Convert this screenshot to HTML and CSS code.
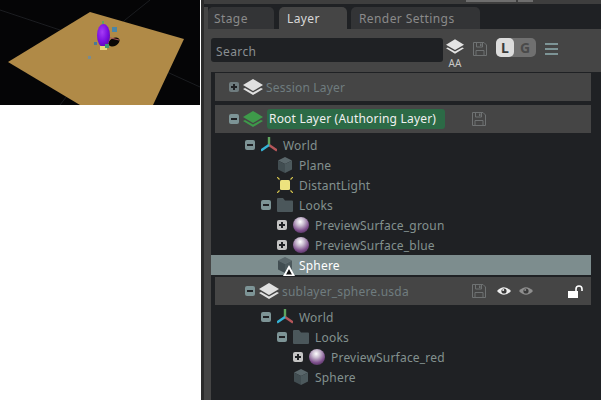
FILE: index.html
```html
<!DOCTYPE html>
<html lang="en">
<head>
    <meta charset="UTF-8">
    <title>Layer</title>
    <link rel="stylesheet" href="styles.css">
</head>
<body>
    <svg class="defs" width="0" height="0">
        <defs>
            <radialGradient id="ball" cx="45%" cy="30%" r="70%">
                <stop offset="0" stop-color="#ffffff"/>
                <stop offset="0.35" stop-color="#c9bcd0"/>
                <stop offset="0.8" stop-color="#7d4f8c"/>
                <stop offset="1" stop-color="#5d3a6b"/>
            </radialGradient>
            <radialGradient id="egg" cx="40%" cy="35%" r="70%">
                <stop offset="0" stop-color="#a63cf5"/>
                <stop offset="0.6" stop-color="#7a0fe0"/>
                <stop offset="1" stop-color="#5a08b0"/>
            </radialGradient>
            <symbol id="i-layers" viewBox="0 0 20 16">
                <path d="M2 9 L0 10 L10 16 L20 10 L18 9 L10 13.5 Z" fill="currentColor"/>
                <path d="M10 0 L20 6 L10 12 L0 6 Z" fill="currentColor"/>
            </symbol>
            <symbol id="i-save" viewBox="0 0 14 14">
                <path d="M.5 .5 H11 L13.5 3 V13.5 H.5 Z M3.5 .5 V5 H9.5 V.5 M3 13.5 V8.5 H11 V13.5" fill="none" stroke="currentColor"/>
                <rect x="7" y="1.5" width="1.5" height="2.5" fill="currentColor"/>
            </symbol>
            <symbol id="i-eye" viewBox="0 0 14 10">
                <path d="M0 5 Q7 -2.500 14 5 Q7 12.500 0 5 Z" fill="currentColor"/>
                <circle cx="7" cy="5" r="2.600" fill="#3a3a3a"/>
                <circle cx="6.200" cy="4" r="1" fill="currentColor"/>
            </symbol>
            <symbol id="i-world" viewBox="0 0 16 16">
                <path d="M8 0 V8" stroke="#5fa55f" stroke-width="2.400" fill="none"/>
                <path d="M8 8 L16 13.500" stroke="#b5565a" stroke-width="2.400" fill="none"/>
                <path d="M8 8 L0 13.500" stroke="#35b3d6" stroke-width="2.400" fill="none"/>
            </symbol>
            <symbol id="i-cube" viewBox="0 0 16 16">
                <path d="M8 0 L15 3.500 L8 7 L1 3.500 Z" fill="#5a676b"/>
                <path d="M1 3.500 L8 7 V16 L1 12.500 Z" fill="#414d51"/>
                <path d="M15 3.500 L8 7 V16 L15 12.500 Z" fill="#4c595d"/>
            </symbol>
            <symbol id="i-folder" viewBox="0 0 16 14">
                <path d="M0 1 Q0 0 1 0 H6 L8 2.500 H15 Q16 2.500 16 3.500 V13 Q16 14 15 14 H1 Q0 14 0 13 Z" fill="#4b575b"/>
            </symbol>
            <symbol id="i-ball" viewBox="0 0 16 16">
                <circle cx="8" cy="8" r="8" fill="url(#ball)"/>
            </symbol>
            <symbol id="i-light" viewBox="0 0 16 16">
                <rect x="3" y="3" width="10" height="10" rx="1.500" fill="#ece27e"/>
                <path d="M2.500 2.500 L0 0 M13.500 2.500 L16 0 M2.500 13.500 L0 16 M13.500 13.500 L16 16" stroke="#d9c84e" stroke-width="1.200"/>
            </symbol>
        </defs>
    </svg>

    <div class="app">
        <div class="left">
            <svg class="viewport" width="200" height="105" viewBox="0 0 200 105">
                <rect width="200" height="105" fill="#050506"/>
                <path d="M0 10 L90 40 M60 105 L125 20 M150 0 L125 20 M167 72 L200 87" stroke="#1b1d20" fill="none"/>
                <path d="M90 12 L184 39 L153 105 L80 105 L8 62 Z" fill="#b08a47"/>
                <ellipse cx="114" cy="42" rx="6" ry="4" fill="#0a0806" transform="rotate(-30 114 42)"/>
                <path d="M103 36 L119 40" stroke="#a8505a"/>
                <ellipse cx="103.500" cy="35.500" rx="6.500" ry="11.500" fill="url(#egg)"/>
                <rect x="100" y="46" width="7" height="4" fill="#e6d77a"/>
                <rect x="112" y="27" width="5" height="5" fill="#4a86a8"/>
                <rect x="105" y="44" width="4" height="4" fill="#3f9a70"/>
                <rect x="88" y="56" width="3" height="3" fill="#7a8c90"/>
                <rect x="94" y="42" width="3" height="3" fill="#4a7a98"/>
                <rect x="102" y="21" width="2" height="3" fill="#5fa55f"/>
            </svg>
        </div>

        <div class="panel">
            <div class="topstrip">
                <span class="strip-piece wide"></span>
                <span class="strip-piece narrow"></span>
            </div>
            <div class="tabs">
                <div class="tab tab-stage">Stage</div>
                <div class="tab tab-layer active">Layer</div>
                <div class="tab tab-render">Render Settings</div>
            </div>
            <div class="toolbar">
                <div class="search">Search</div>
                <div class="aa">
                    <svg class="aa-icon" width="18" height="15"><use href="#i-layers"/></svg>
                    <span>AA</span>
                </div>
                <svg class="save-top" width="14" height="14"><use href="#i-save"/></svg>
                <div class="switch">
                    <span class="switch-on">L</span>
                    <span class="switch-off">G</span>
                </div>
                <div class="menu"><i></i><i></i><i></i></div>
            </div>

            <div class="tree">
                <div class="layer layer-session">
                    <span class="toggle plus"></span>
                    <svg class="layer-icon" width="20" height="16"><use href="#i-layers"/></svg>
                    <span class="layer-name">Session Layer</span>
                </div>
                <div class="layer layer-root">
                    <span class="toggle minus"></span>
                    <svg class="layer-icon green" width="20" height="16"><use href="#i-layers"/></svg>
                    <span class="chip">Root Layer (Authoring Layer)</span>
                    <div class="layer-actions">
                        <svg class="save-row" width="14" height="14"><use href="#i-save"/></svg>
                    </div>
                </div>
                <div class="rows">
                    <div class="row d0"><span class="slot"><span class="toggle minus"></span></span><svg class="icon" width="16" height="16"><use href="#i-world"/></svg>World</div>
                    <div class="row d1"><span class="slot"></span><svg class="icon" width="16" height="16"><use href="#i-cube"/></svg>Plane</div>
                    <div class="row d1"><span class="slot"></span><svg class="icon" width="16" height="16"><use href="#i-light"/></svg>DistantLight</div>
                    <div class="row d1"><span class="slot"><span class="toggle minus"></span></span><svg class="icon" width="16" height="14"><use href="#i-folder"/></svg>Looks</div>
                    <div class="row d2"><span class="slot"><span class="toggle plus light"></span></span><svg class="icon" width="16" height="16"><use href="#i-ball"/></svg>PreviewSurface_groun</div>
                    <div class="row d2"><span class="slot"><span class="toggle plus light"></span></span><svg class="icon" width="16" height="16"><use href="#i-ball"/></svg>PreviewSurface_blue</div>
                    <div class="row d1 selected">
                        <span class="slot"></span>
                        <span class="icon-wrap">
                            <svg class="icon" width="16" height="16"><use href="#i-cube"/></svg>
                            <svg class="warn" width="12" height="11" viewBox="0 0 12 11"><path d="M6 3 L2.500 10 H9.500 Z" fill="#111"/><path d="M6 0 L12 11 H0 Z M6 4 L3 9.500 H9 Z" fill="#fff" fill-rule="evenodd"/></svg>
                        </span>
                        Sphere
                    </div>
                </div>
                <div class="layer layer-sub">
                    <span class="toggle minus"></span>
                    <svg class="layer-icon" width="20" height="16"><use href="#i-layers"/></svg>
                    <span class="layer-name">sublayer_sphere.usda</span>
                    <div class="layer-actions">
                        <svg class="save-row" width="14" height="14"><use href="#i-save"/></svg>
                        <svg class="eye" width="14" height="10"><use href="#i-eye"/></svg>
                        <svg class="eye dim" width="14" height="10"><use href="#i-eye"/></svg>
                        <svg class="lock" width="15" height="13" viewBox="0 0 15 13">
                            <path d="M8 6 V4 A3 3 0 0 1 14 4 V6" fill="none" stroke="#fff" stroke-width="1.600"/>
                            <rect x="0" y="6" width="10" height="7" fill="#fff"/>
                        </svg>
                    </div>
                </div>
                <div class="rows">
                    <div class="row d1"><span class="slot"><span class="toggle minus"></span></span><svg class="icon" width="16" height="16"><use href="#i-world"/></svg>World</div>
                    <div class="row d2"><span class="slot"><span class="toggle minus"></span></span><svg class="icon" width="16" height="14"><use href="#i-folder"/></svg>Looks</div>
                    <div class="row d3"><span class="slot"><span class="toggle plus light"></span></span><svg class="icon" width="16" height="16"><use href="#i-ball"/></svg>PreviewSurface_red</div>
                    <div class="row d2"><span class="slot"></span><svg class="icon" width="16" height="16"><use href="#i-cube"/></svg>Sphere</div>
                </div>
            </div>
        </div>
    </div>
</body>
</html>
```
FILE: styles.css
```css
body {
    margin: 0;
    background-color: #fff;
    font-family: "Noto Sans", sans-serif;
    font-size: 12px;
    letter-spacing: 0.2px;
}

.defs {
    display: block;
    height: 0;
}

.app {
    display: flex;
    width: 601px;
    height: 400px;
    overflow: hidden;
}

.left {
    width: 200px;
    flex: none;
    margin-right: 1px;
}

.viewport {
    display: block;
    filter: blur(0.4px);
}

.panel {
    flex: 1;
    display: flex;
    flex-direction: column;
    min-width: 0;
    background-color: #454545;
    border-left: 3px solid #2c2c2c;
    padding-left: 7px;
}

.topstrip {
    display: flex;
    justify-content: flex-end;
    gap: 2px;
    height: 7px;
    margin-left: -7px;
    padding-right: 68px;
    background: linear-gradient(#3e3e3e 0, #3e3e3e 4px, #1f2124 4px);
}

.strip-piece {
    height: 2px;
    background-color: #6e6e6e;
}

.strip-piece.wide {
    width: 50px;
}

.strip-piece.narrow {
    width: 15px;
}

.tabs {
    display: flex;
    height: 22px;
    margin-left: -3px;
    background-color: #1f2124;
    letter-spacing: 0.4px;
}

.tab {
    display: flex;
    align-items: center;
    padding: 1px 0 0 6px;
    box-sizing: border-box;
    border-radius: 5px 5px 0 0;
    background-color: #333436;
    color: #8a8a8a;
}

.tab-stage {
    width: 66px;
    margin-right: 5px;
}

.tab-layer {
    width: 68px;
    padding-left: 8px;
    margin-right: 4px;
}

.tab-render {
    width: 129px;
    padding-left: 8px;
}

.tab.active {
    background-color: #454545;
    color: #d8d8d8;
}

.toolbar {
    display: flex;
    align-items: flex-start;
    height: 43px;
    padding-top: 9px;
    box-sizing: border-box;
}

.search {
    display: flex;
    align-items: center;
    width: 232px;
    height: 24px;
    padding: 3px 0 0 5px;
    box-sizing: border-box;
    border-radius: 3px;
    background-color: #1f2124;
    color: #8a8f92;
    letter-spacing: 0.4px;
}

.aa {
    display: flex;
    flex-direction: column;
    align-items: center;
    width: 18px;
    margin-left: 3px;
    color: #c8c8c8;
    font-size: 10px;
    line-height: 10px;
    letter-spacing: 0;
}

.aa-icon {
    color: #e4e4e4;
    margin: 1px 0 4px;
}

.save-top {
    margin: 4px 0 0 9px;
    color: #6f7273;
}

.switch {
    display: flex;
    align-items: center;
    width: 40px;
    height: 19px;
    margin-left: 9px;
    border-radius: 5px;
    background-color: #707070;
    font-weight: bold;
    font-size: 14px;
    letter-spacing: 0;
}

.switch-on {
    width: 18px;
    height: 19px;
    line-height: 19px;
    text-align: center;
    border-radius: 5px;
    background-color: #dcdcdc;
    color: #3a3a3a;
}

.switch-off {
    flex: 1;
    text-align: center;
    color: #4a4a4a;
}

.menu {
    display: flex;
    flex-direction: column;
    gap: 3px;
    margin: 5px 0 0 9px;
}

.menu i {
    display: block;
    width: 13px;
    height: 2px;
    background-color: #7d9496;
}

.tree {
    flex: 1;
    background-color: #1f2124;
    padding-top: 1px;
}

.layer {
    display: flex;
    align-items: center;
    height: 28px;
    width: 376px;
    box-sizing: border-box;
    margin-left: 4px;
    background-color: #454545;
    color: #6f7c7f;
}

.layer-session,
.layer-root {
    padding-left: 14px;
    margin-bottom: 4px;
}

.layer-root {
    margin-bottom: 2px;
}

.layer-sub {
    padding-left: 30px;
    margin-top: 2px;
    margin-bottom: 2px;
}

.layer-icon {
    margin: 0 3px 0 4px;
    color: #e0e0e0;
}

.layer-icon.green {
    color: #3e9a4a;
}

.chip {
    display: block;
    width: 178px;
    height: 20px;
    box-sizing: border-box;
    line-height: 20px;
    padding-left: 2px;
    margin-left: 1px;
    border-radius: 3px;
    background-color: #2c6a46;
    color: #f0f0f0;
}

.layer-actions {
    display: flex;
    align-items: center;
    width: 119px;
    margin-left: auto;
}

.save-row {
    color: #6f7273;
}

.eye {
    margin-left: 11px;
    color: #f0f0f0;
}

.eye.dim {
    margin-left: 8px;
    color: #8f8f8f;
}

.lock {
    margin-left: 35px;
}

.toggle {
    position: relative;
    display: block;
    flex: none;
    width: 10px;
    height: 10px;
    border-radius: 2px;
    background-color: #7d9496;
}

.toggle.light {
    background-color: #c4c4c4;
}

.layer-session .toggle {
    background-color: #6f7c7f;
}

.toggle::before,
.toggle.plus::after {
    content: "";
    position: absolute;
    background-color: #1f2124;
}

.toggle::before {
    left: 2px;
    top: 4px;
    width: 6px;
    height: 2px;
}

.toggle.plus::after {
    left: 4px;
    top: 2px;
    width: 2px;
    height: 6px;
}

.row {
    display: flex;
    align-items: center;
    height: 20px;
    width: 380px;
    box-sizing: border-box;
    color: #83918f;
}

.row.d0 { padding-left: 34px; }
.row.d1 { padding-left: 50px; }
.row.d2 { padding-left: 66px; }
.row.d3 { padding-left: 82px; }

.slot {
    display: block;
    flex: none;
    width: 16px;
}

.icon {
    flex: none;
    margin-right: 6px;
}

.icon-wrap {
    position: relative;
    display: flex;
}

.warn {
    position: absolute;
    left: 6px;
    top: 8px;
}

.row.selected {
    background-color: #7d8d8e;
    color: #fff;
}
```
